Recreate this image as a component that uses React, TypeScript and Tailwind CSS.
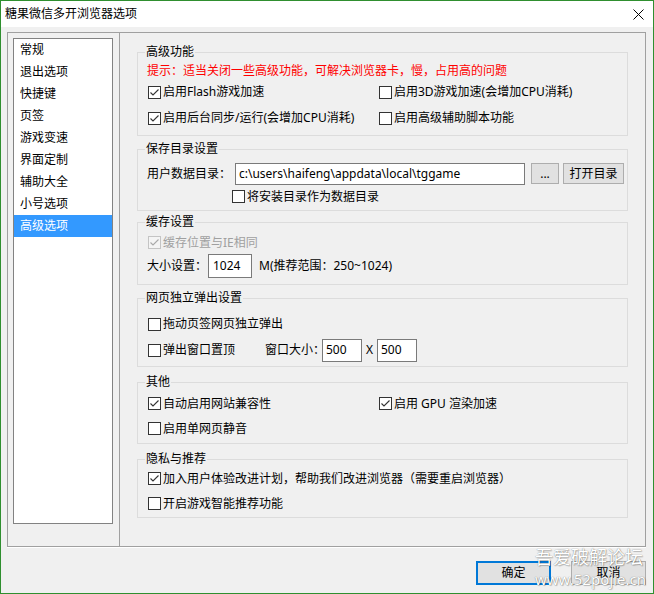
import React from 'react';

const navItems = ['常规', '退出选项', '快捷键', '页签', '游戏变速', '界面定制', '辅助大全', '小号选项', '高级选项'];

function Box({ checked, disabled }: { checked?: boolean; disabled?: boolean }) {
  const stroke = disabled ? '#c4c4c4' : '#333333';
  return (
    <svg width="13" height="13" viewBox="0 0 13 13" className="shrink-0">
      <rect x="0.5" y="0.5" width="12" height="12" fill={disabled ? '#f4f4f4' : '#ffffff'} stroke={stroke} />
      {checked && (
        <polyline points="2.5,6.5 5,9 10.5,3.5" fill="none" stroke={disabled ? '#a8a8a8' : '#333333'} strokeWidth="1.1" />
      )}
    </svg>
  );
}

function Check({ label, checked, disabled }: { label: string; checked?: boolean; disabled?: boolean }) {
  return (
    <label className="flex items-center gap-[2px] whitespace-nowrap">
      <Box checked={checked} disabled={disabled} />
      <span className={disabled ? 'text-[#a0a0a0]' : ''}>{label}</span>
    </label>
  );
}

function Group({ title, className, children }: { title: string; className: string; children: React.ReactNode }) {
  return (
    <div className={`relative border border-[#dcdcdc] ${className}`}>
      <span className="absolute left-[7px] top-[-9px] bg-[#f0f0f0] px-[1px] leading-[16px]">{title}</span>
      {children}
    </div>
  );
}

function Field({ value, className }: { value: string; className: string }) {
  return (
    <div className={`flex items-center border border-[#7a7a7a] bg-white whitespace-nowrap overflow-hidden ${className}`}>
      {value}
    </div>
  );
}

export default function App() {
  return (
    <div className="relative w-[654px] h-[594px] bg-[#f0f0f0] border border-[#2f8f2f] flex flex-col text-[12px] leading-[16px] text-black font-['Noto_Sans','Noto_Sans_CJK_SC',sans-serif]">
      {/* title bar */}
      <div className="h-[26px] bg-white flex items-center justify-between pl-[4px] pr-[9px]">
        <span>糖果微信多开浏览器选项</span>
        <svg width="11" height="11" viewBox="0 0 11 11">
          <path d="M0.5 0.5L10.5 10.5M10.5 0.5L0.5 10.5" stroke="#000" strokeWidth="1" />
        </svg>
      </div>

      {/* main frame */}
      <div className="mt-[5px] ml-[6px] mr-[7px] h-[515px] flex border border-[#a0a0a0] shadow-[0_1px_0_#ffffff]">
        <div className="w-[112px] border-r border-[#a0a0a0] pl-[5px] pt-[5px]">
          <ul className="w-[100px] h-[486px] border border-[#828282] bg-white">
            {navItems.map((item, i) => (
              <li
                key={item}
                className={`h-[22px] flex items-center pl-[6px] ${i === 8 ? 'bg-[#3399ff] text-white' : ''}`}
              >
                {item}
              </li>
            ))}
          </ul>
        </div>

        <div className="flex-1 px-[17px] pt-[19px]">
          <Group title="高级功能" className="pt-[9px] pb-[4px]">
            <div className="h-[17px] flex items-center pl-[9px] text-[#ff0000]">
              提示：适当关闭一些高级功能，可解决浏览器卡，慢，占用高的问题
            </div>
            <div className="grid grid-cols-[241px_1fr]">
              <div className="h-[26px] flex items-center pl-[10px]"><Check label="启用Flash游戏加速" checked /></div>
              <div className="h-[26px] flex items-center"><Check label="启用3D游戏加速(会增加CPU消耗)" /></div>
              <div className="h-[26px] flex items-center pl-[10px]"><Check label="启用后台同步/运行(会增加CPU消耗)" checked /></div>
              <div className="h-[26px] flex items-center"><Check label="启用高级辅助脚本功能" /></div>
            </div>
          </Group>

          <Group title="保存目录设置" className="mt-[13px] pt-[12px] pb-[2px]">
            <div className="h-[23px] flex items-center pl-[9px]">
              <span className="w-[88px] whitespace-nowrap">用户数据目录：</span>
              <Field value="c:\users\haifeng\appdata\local\tggame" className="w-[290px] h-[22px] pl-[3px]" />
              <button className="ml-[6px] w-[28px] h-[21px] border border-[#adadad] bg-[#e1e1e1] leading-[12px]">...</button>
              <button className="ml-[4px] w-[61px] h-[21px] border border-[#adadad] bg-[#e1e1e1]">打开目录</button>
            </div>
            <div className="h-[23px] flex items-center pl-[94px]">
              <Check label="将安装目录作为数据目录" />
            </div>
          </Group>

          <Group title="缓存设置" className="mt-[11px] pt-[8px] pb-[6px]">
            <div className="h-[23px] flex items-center pl-[10px]">
              <Check label="缓存位置与IE相同" checked disabled />
            </div>
            <div className="h-[24px] flex items-center pl-[9px]">
              <span className="w-[61px] whitespace-nowrap">大小设置：</span>
              <Field value="1024" className="w-[44px] h-[24px] pl-[4px]" />
              <span className="ml-[7px] whitespace-nowrap">M(推荐范围：250~1024)</span>
            </div>
          </Group>

          <Group title="网页独立弹出设置" className="mt-[13px] pt-[12px] pb-[3px]">
            <div className="h-[26px] flex items-center pl-[10px]">
              <Check label="拖动页签网页独立弹出" />
            </div>
            <div className="h-[26px] flex items-center pl-[10px]">
              <div className="w-[117px]"><Check label="弹出窗口置顶" /></div>
              <span className="w-[57px] whitespace-nowrap">窗口大小：</span>
              <Field value="500" className="w-[40px] h-[23px] pl-[3px]" />
              <span className="ml-[4px] w-[11px]">X</span>
              <Field value="500" className="w-[40px] h-[23px] pl-[3px]" />
            </div>
          </Group>

          <Group title="其他" className="mt-[15px] pt-[8px] pb-[2px]">
            <div className="grid grid-cols-[241px_1fr]">
              <div className="h-[25px] flex items-center pl-[10px]"><Check label="自动启用网站兼容性" checked /></div>
              <div className="h-[25px] flex items-center"><Check label="启用 GPU 渲染加速" checked /></div>
              <div className="h-[25px] flex items-center pl-[10px]"><Check label="启用单网页静音" /></div>
            </div>
          </Group>

          <Group title="隐私与推荐" className="mt-[15px] pt-[6px] pb-[1px]">
            <div className="h-[25px] flex items-center pl-[10px]">
              <Check label="加入用户体验改进计划，帮助我们改进浏览器（需要重启浏览器）" checked />
            </div>
            <div className="h-[25px] flex items-center pl-[10px]">
              <Check label="开启游戏智能推荐功能" />
            </div>
          </Group>
        </div>
      </div>

      {/* footer buttons */}
      <div className="mt-[14px] pr-[7px] flex justify-end gap-[20px]">
        <button className="w-[75px] h-[24px] border-2 border-[#0078d7] bg-[#e1e1e1]">确定</button>
        <button className="w-[75px] h-[24px] border border-[#adadad] bg-[#e1e1e1]">取消</button>
      </div>

      {/* watermark */}
      <div className="absolute left-[534px] top-[545px] flex flex-col text-white pointer-events-none [text-shadow:0_0_1px_rgba(0,0,0,0.55),1px_1px_1px_rgba(0,0,0,0.2)]">
        <span className="text-[18px] leading-[22px]">吾爱破解论坛</span>
        <span className="text-[15px] leading-[18px] mt-[2px]">www.52pojie.cn</span>
      </div>
    </div>
  );
}
